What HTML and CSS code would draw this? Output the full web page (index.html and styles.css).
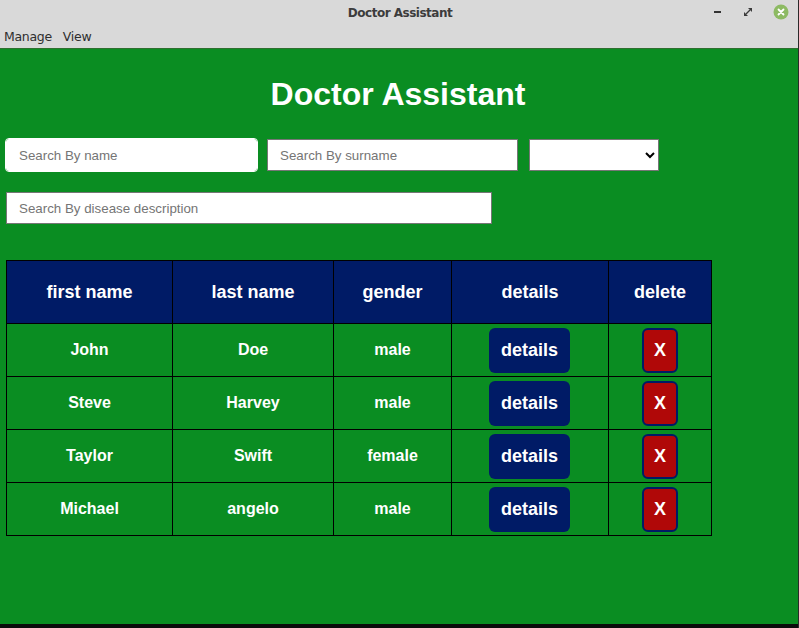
FILE: index.html
```html
<!DOCTYPE html>
<html lang="en">
<head>
<meta charset="utf-8">
<title>Doctor Assistant</title>
<link rel="stylesheet" href="styles.css">
</head>
<body>
<div class="window">
  <div class="titlebar">
    <div class="title">Doctor Assistant</div>
    <div class="controls">
      <span class="ctl-min"></span>
      <svg class="ctl-max" width="10" height="10" viewBox="0 0 10 10"><path d="M5 1h4v4z M1 5v4h4z" fill="#3a3a3a"/><path d="M3 7L7 3" stroke="#3a3a3a" stroke-width="1.2"/></svg>
      <svg class="ctl-close" width="16" height="16" viewBox="0 0 16 16"><circle cx="8" cy="8" r="7.5" fill="#8dba63"/><path d="M5.5 5.5l5 5M10.5 5.5l-5 5" stroke="#fff" stroke-width="1.8" stroke-linecap="round"/></svg>
    </div>
  </div>
  <div class="menubar">
    <span class="menu-item">Manage</span>
    <span class="menu-item">View</span>
  </div>
  <div class="content">
    <h1 class="heading">Doctor Assistant</h1>
    <div class="filters">
      <div class="filter-row">
        <input class="field field-name focused" type="text" placeholder="Search By name">
        <input class="field field-surname" type="text" placeholder="Search By surname">
        <select class="field field-select"><option></option></select>
      </div>
      <div class="filter-row">
        <input class="field field-disease" type="text" placeholder="Search By disease description">
      </div>
    </div>
    <table class="patients">
      <thead>
        <tr><th class="c1">first name</th><th class="c2">last name</th><th class="c3">gender</th><th class="c4">details</th><th class="c5">delete</th></tr>
      </thead>
      <tbody>
        <tr><td>John</td><td>Doe</td><td>male</td><td><button class="btn-details">details</button></td><td><button class="btn-delete">X</button></td></tr>
        <tr><td>Steve</td><td>Harvey</td><td>male</td><td><button class="btn-details">details</button></td><td><button class="btn-delete">X</button></td></tr>
        <tr><td>Taylor</td><td>Swift</td><td>female</td><td><button class="btn-details">details</button></td><td><button class="btn-delete">X</button></td></tr>
        <tr><td>Michael</td><td>angelo</td><td>male</td><td><button class="btn-details">details</button></td><td><button class="btn-delete">X</button></td></tr>
      </tbody>
    </table>
  </div>
  <div class="bottom-strip"></div>
</div>
</body>
</html>
```
FILE: styles.css
```css
html, body {
  margin: 0;
  padding: 0;
  background: #0b0b0b;
}
.window {
  width: 798px;
  height: 628px;
  display: flex;
  flex-direction: column;
  font-family: "Liberation Sans", Arial, sans-serif;
  border-right: 1px solid #2a2a2a;
}
.titlebar {
  height: 25px;
  background: #d9d9d9;
  display: flex;
  align-items: center;
  justify-content: center;
  position: relative;
}
.title {
  font-family: "DejaVu Sans", sans-serif;
  font-weight: bold;
  font-size: 12px;
  color: #3c3c3c;
  letter-spacing: -0.5px;
  padding-left: 2px;
}
.controls {
  position: absolute;
  right: 9px;
  top: 4px;
  display: flex;
  align-items: center;
  gap: 0;
}
.ctl-min {
  width: 7px;
  height: 2px;
  background: #333;
  margin-right: 22px;
}
.ctl-max {
  margin-right: 20px;
}
.menubar {
  height: 23px;
  background: #d9d9d9;
  display: flex;
  align-items: center;
  gap: 11px;
  padding-left: 4px;
  font-family: "DejaVu Sans", sans-serif;
  font-size: 12.5px;
  color: #2e2e2e;
  border-bottom: 1px solid #2f6f2f;
}
.menu-item {
  letter-spacing: -0.3px;
}
.content {
  flex: 1;
  background: #0a8d22;
  padding: 0 0 0 6px;
  display: flex;
  flex-direction: column;
}
.heading {
  margin: 27px 0 0 0;
  text-align: center;
  color: #fff;
  font-size: 32px;
  font-weight: bold;
  line-height: 37px;
  padding-right: 8px;
}
.filters {
  display: flex;
  flex-direction: column;
  gap: 21px;
  margin-top: 26px;
}
.filter-row {
  display: flex;
  align-items: center;
  gap: 10px;
}
.field {
  box-sizing: border-box;
  height: 32px;
  border: 1px solid #767676;
  background: #fff;
  font-family: "Liberation Sans", Arial, sans-serif;
  font-size: 13.33px;
  padding: 0 12px;
  margin: 0;
  border-radius: 0;
}
.field::placeholder {
  color: #757575;
}
.field-name {
  width: 251px;
  border-color: #fff;
  border-radius: 3px;
  outline: 1px solid #fff;
  caret-color: #000;
}
.field-surname {
  width: 251px;
}
.field-select {
  width: 130px;
  height: 32px;
  padding: 0 4px;
  margin-left: 1px;
}
.field-disease {
  width: 486px;
}
.patients {
  margin-top: 36px;
  border-collapse: collapse;
  width: 706px;
  color: #fff;
}
.patients th, .patients td {
  border: 1px solid #000;
  text-align: center;
  font-weight: bold;
  padding: 0;
}
.patients th {
  background: #001b66;
  height: 62px;
  font-size: 18px;
}
.patients td {
  height: 52px;
  font-size: 16px;
}
.c1 { width: 165px; }
.c2 { width: 160px; }
.c3 { width: 117px; }
.c4 { width: 156px; }
.c5 { width: 102px; }
.btn-details {
  width: 81px;
  height: 45px;
  background: #001b66;
  color: #fff;
  border: none;
  border-radius: 6px;
  font-family: "Liberation Sans", Arial, sans-serif;
  font-weight: bold;
  font-size: 18px;
  display: block;
  margin: 0 0 0 37px;
}
.btn-delete {
  box-sizing: border-box;
  width: 36px;
  height: 45px;
  background: #b00808;
  color: #fff;
  border: 2px solid #001b66;
  border-radius: 6px;
  font-family: "Liberation Sans", Arial, sans-serif;
  font-weight: bold;
  font-size: 18px;
  display: block;
  margin: 0 auto;
  padding: 0;
}
.bottom-strip {
  height: 4px;
  background: #0b0b0b;
}
```
